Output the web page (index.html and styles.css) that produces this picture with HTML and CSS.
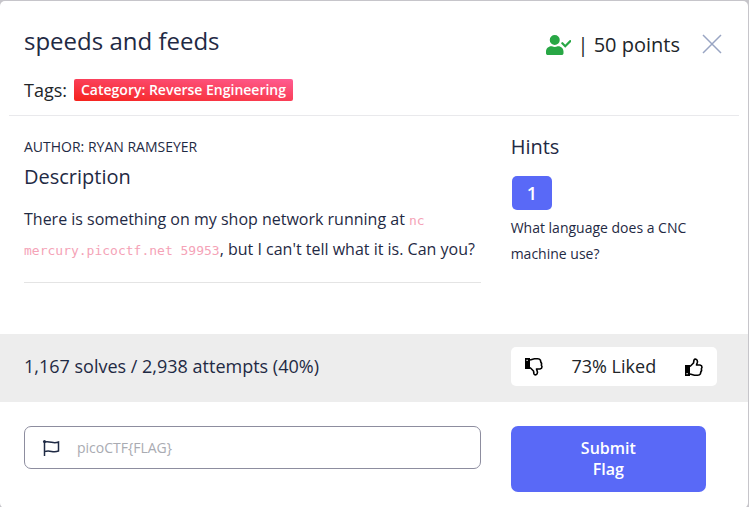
FILE: index.html
```html
<!DOCTYPE html>
<html lang="en">
<head>
<meta charset="utf-8">
<title>speeds and feeds</title>
<link rel="stylesheet" href="styles.css">
</head>
<body>
<main class="modal">
  <header class="modal-header">
    <div class="heading">
      <h1 class="title">speeds and feeds</h1>
      <div class="tags">Tags: <span class="tag">Category: Reverse Engineering</span></div>
    </div>
    <div class="score">
      <svg class="solved" viewBox="0 0 640 512" aria-hidden="true"><path d="M224 256a128 128 0 1 0 0-256 128 128 0 0 0 0 256zm89 32h-17a174 174 0 0 1-144 0h-17C60 288 0 348 0 422v42c0 27 21 48 48 48h352c27 0 48-21 48-48v-42c0-74-60-134-135-134z"/><path class="tick" d="M418 212l74 74L622 155"/></svg>
      <span>| 50 points</span>
    </div>
    <button class="close" type="button" aria-label="Close"><svg viewBox="0 0 20 20" aria-hidden="true"><path d="M1 1l18 18M19 1L1 19"/></svg></button>
  </header>

  <div class="row details">
    <section class="col">
      <p class="author">AUTHOR: RYAN RAMSEYER</p>
      <h2 class="subtitle">Description</h2>
      <p class="description">There is something on my shop network running at <code>nc mercury.picoctf.net 59953</code>, but I can't tell what it is. Can you?</p>
      <hr class="rule">
    </section>
    <section class="col">
      <h2 class="subtitle">Hints</h2>
      <button class="hint-button" type="button">1</button>
      <p class="hint">What language does a CNC machine use?</p>
    </section>
  </div>

  <div class="row stats">
    <div class="col">1,167 solves / 2,938 attempts (40%)</div>
    <div class="col">
      <div class="rating">
        <button class="thumb" type="button" aria-label="Dislike"><svg class="down" viewBox="0 0 18 18" aria-hidden="true"><path class="solid" d="M0 7h5v11H0zM1.500 15v1.200h1.200V15z"/><path d="M5 8.500L8.500 5 9 2q.6-1.200 2-.8 1.800.8 1.400 3L11.500 7H15q2 .4 2 2.200l-.6 1.600.2 1.700-.8 1.500-.4 1.800q-.8 1.400-2.600 1.400H9.500L5 16"/></svg></button>
        <span>73% Liked</span>
        <button class="thumb" type="button" aria-label="Like"><svg viewBox="0 0 18 18" aria-hidden="true"><path class="solid" d="M0 7h5v11H0zM1.500 15v1.200h1.200V15z"/><path d="M5 8.500L8.500 5 9 2q.6-1.200 2-.8 1.800.8 1.400 3L11.500 7H15q2 .4 2 2.200l-.6 1.600.2 1.700-.8 1.500-.4 1.800q-.8 1.400-2.600 1.400H9.500L5 16"/></svg></button>
      </div>
    </div>
  </div>

  <form class="row submission">
    <div class="col">
      <label class="flag-field">
        <svg viewBox="0 0 18 16" aria-hidden="true"><path d="M2.500 1v15M2.500 2q3-.6 7 .3t7-.3v9q-3 1.200-7 .4t-7 .2"/><circle cx="2.500" cy="1.500" r="1.500"/></svg>
        <input type="text" placeholder="picoCTF{FLAG}" aria-label="Flag">
      </label>
    </div>
    <div class="col"><button class="submit" type="button">Submit<br>Flag</button></div>
  </form>
</main>
</body>
</html>
```

FILE: styles.css
```css
* { box-sizing: border-box; }
body {
  margin: 0;
  padding: 1px 1px 0 0;
  min-height: 100vh;
  display: flex;
  background: #c6c5ca;
  color: #212529;
  font-family: "Open Sans", sans-serif;
}
h1, h2, p { margin: 0; font-weight: 400; }
button { font: inherit; border: 0; cursor: pointer; }

.modal { flex: 1; background: #fff; border-radius: 5px; overflow: hidden; }

.modal-header {
  display: flex;
  align-items: flex-start;
  margin: 0 9px;
  padding: 20px 17px 10px 15px;
  border-bottom: 1px solid #e9e9ec;
}
.heading { flex: 1; }
.title { font-size: 24px; line-height: 40px; color: #1f2a44; }
.tags { margin-top: 14px; font-size: 18px; line-height: 30px; display: flex; align-items: center; gap: 7px; }
.tag {
  padding: 0 7px;
  border-radius: 2px;
  font-size: 14px;
  line-height: 22px;
  font-weight: 600;
  color: #fff;
  background: linear-gradient(to top right, #f5221b, #ff5c93);
}
.score { display: flex; align-items: center; gap: 7px; margin-top: 4px; font-size: 20px; line-height: 40px; }
.solved { width: 25px; height: 20px; fill: #28a745; }
.tick { fill: none; stroke: #28a745; stroke-width: 56; stroke-linecap: round; }
.close { margin: 13px 0 0 22px; padding: 0; background: none; height: 20px; }
.close svg { display: block; width: 20px; height: 20px; fill: none; stroke: #99a5c3; stroke-width: 1.500; }

.row { display: grid; grid-template-columns: 2fr 1fr; padding: 0 9px; }
.col { padding: 0 15px; }

.details { padding-top: 16px; color: #1f2a44; }
.author { font-size: 14px; line-height: 30px; }
.subtitle { font-size: 20px; line-height: 30px; }
.description { margin-top: 12px; font-size: 16px; line-height: 30px; }
.description code { font-family: "DejaVu Sans Mono", monospace; font-size: 13px; line-height: 1; color: #f5a3b7; }
.rule { margin: 18px 0 51px; border: 0; border-top: 1px solid #e4e4e4; }
.hint-button {
  display: block;
  margin: 14px 1px 5px;
  padding: 0 15px;
  border-radius: 5px;
  font-size: 18px;
  line-height: 34px;
  font-weight: 600;
  color: #fff;
  background: #5969f7;
}
.hint { font-size: 14px; line-height: 26px; }

.stats { padding-top: 13px; padding-bottom: 16px; background: #ededed; font-size: 18px; line-height: 39px; color: #1f2a44; }
.rating {
  display: flex;
  align-items: center;
  justify-content: space-between;
  margin-right: 7px;
  padding: 0 14px;
  border-radius: 5px;
  background: #fff;
  color: #212529;
}
.thumb { padding: 0; background: none; }
.thumb svg { display: block; width: 18px; height: 18px; fill: none; stroke: #000; stroke-width: 1.600; stroke-linejoin: round; }
.thumb .solid { fill: #000; fill-rule: evenodd; stroke: none; }
.thumb .down { transform: scaleY(-1); }

.submission { padding-top: 24px; padding-bottom: 16px; align-items: start; }
.flag-field {
  display: flex;
  align-items: center;
  gap: 17px;
  height: 43px;
  padding: 0 17px;
  border: 1px solid #8d8d9f;
  border-radius: 7px;
}
.flag-field svg { width: 18px; height: 16px; fill: none; stroke: #1f2a44; stroke-width: 1.500; }
.flag-field circle { fill: #1f2a44; stroke: none; }
.flag-field input { flex: 1; min-width: 0; padding: 0; border: 0; outline: 0; background: none; font: inherit; font-size: 14px; }
.flag-field input::placeholder { color: #a9abb2; opacity: 1; }
.submit {
  display: block;
  width: calc(100% - 18px);
  padding: 12px;
  border-radius: 7px;
  font-size: 16px;
  line-height: 21px;
  font-weight: 600;
  color: #fff;
  background: #5969f7;
}
```
